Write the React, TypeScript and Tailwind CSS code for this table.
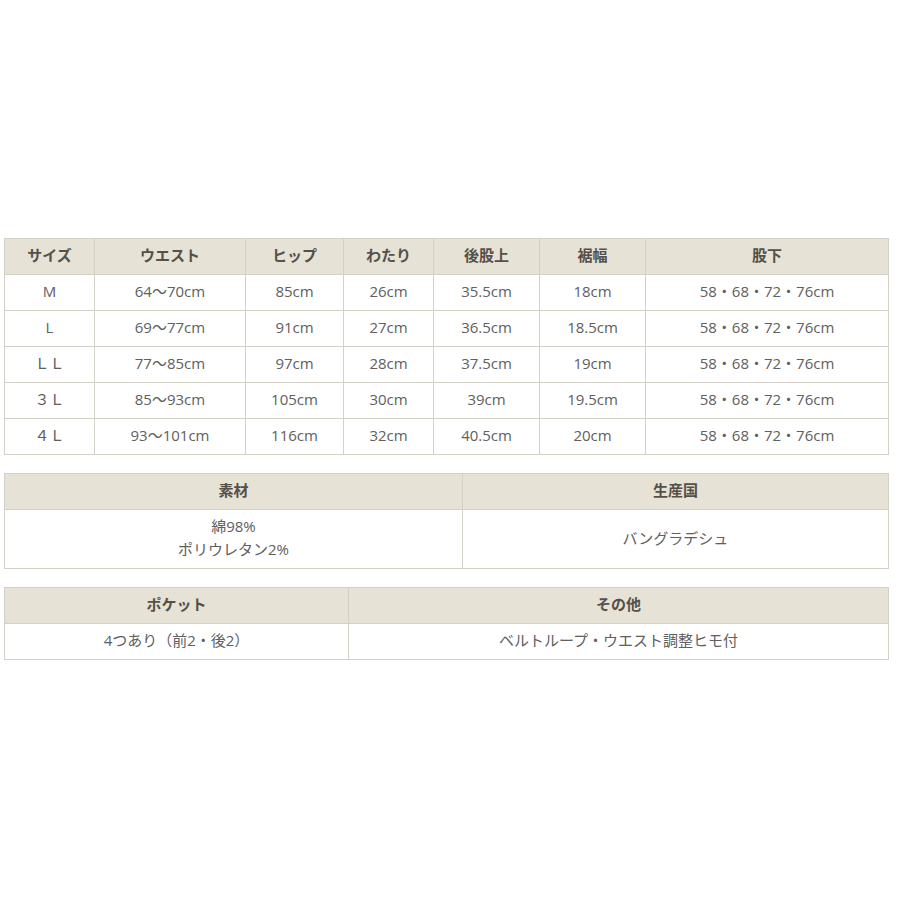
import React from "react";

const font = { fontFamily: '"Open Sans", "Noto Sans CJK JP", sans-serif' };

const sizeRows = [
  ["M", "64〜70cm", "85cm", "26cm", "35.5cm", "18cm", "58・68・72・76cm"],
  ["L", "69〜77cm", "91cm", "27cm", "36.5cm", "18.5cm", "58・68・72・76cm"],
  ["ＬＬ", "77〜85cm", "97cm", "28cm", "37.5cm", "19cm", "58・68・72・76cm"],
  ["３Ｌ", "85〜93cm", "105cm", "30cm", "39cm", "19.5cm", "58・68・72・76cm"],
  ["４Ｌ", "93〜101cm", "116cm", "32cm", "40.5cm", "20cm", "58・68・72・76cm"],
];
const headers = ["サイズ", "ウエスト", "ヒップ", "わたり", "後股上", "裾幅", "股下"];
const widths = [90, 151, 98, 90, 106, 106, 243];

const th = "border border-[#d3d0c8] bg-[#e6e2d6] text-[#555049] font-bold text-[15px] h-[36px] text-center p-0 pb-[2px]";
const td = "border border-[#d3d0c8] bg-white text-[#606060] text-[15px] h-[36px] text-center p-0 pb-[2px]";

export default function App() {
  return (
    <div className="w-[899px] h-[899px] bg-white pt-[238px] pl-[4px]" style={font}>
      <table className="border-collapse table-fixed w-[884px]">
        <colgroup>
          {widths.map((w, i) => (
            <col key={i} style={{ width: w }} />
          ))}
        </colgroup>
        <thead>
          <tr>
            {headers.map((h) => (
              <th key={h} className={th}>{h}</th>
            ))}
          </tr>
        </thead>
        <tbody>
          {sizeRows.map((r, i) => (
            <tr key={i}>
              {r.map((c, j) => (
                <td key={j} className={td}>{c}</td>
              ))}
            </tr>
          ))}
        </tbody>
      </table>

      <table className="border-collapse table-fixed w-[884px] mt-[18px]">
        <colgroup>
          <col style={{ width: 458 }} />
          <col style={{ width: 426 }} />
        </colgroup>
        <thead>
          <tr>
            <th className={th}>素材</th>
            <th className={th}>生産国</th>
          </tr>
        </thead>
        <tbody>
          <tr>
            <td className={td + " h-[59px] leading-[23px]"}>
              綿98%<br />ポリウレタン2%
            </td>
            <td className={td + " h-[59px]"}>バングラデシュ</td>
          </tr>
        </tbody>
      </table>

      <table className="border-collapse table-fixed w-[884px] mt-[18px]">
        <colgroup>
          <col style={{ width: 344 }} />
          <col style={{ width: 540 }} />
        </colgroup>
        <thead>
          <tr>
            <th className={th}>ポケット</th>
            <th className={th}>その他</th>
          </tr>
        </thead>
        <tbody>
          <tr>
            <td className={td}>4つあり（前2・後2）</td>
            <td className={td}>ベルトループ・ウエスト調整ヒモ付</td>
          </tr>
        </tbody>
      </table>
    </div>
  );
}
